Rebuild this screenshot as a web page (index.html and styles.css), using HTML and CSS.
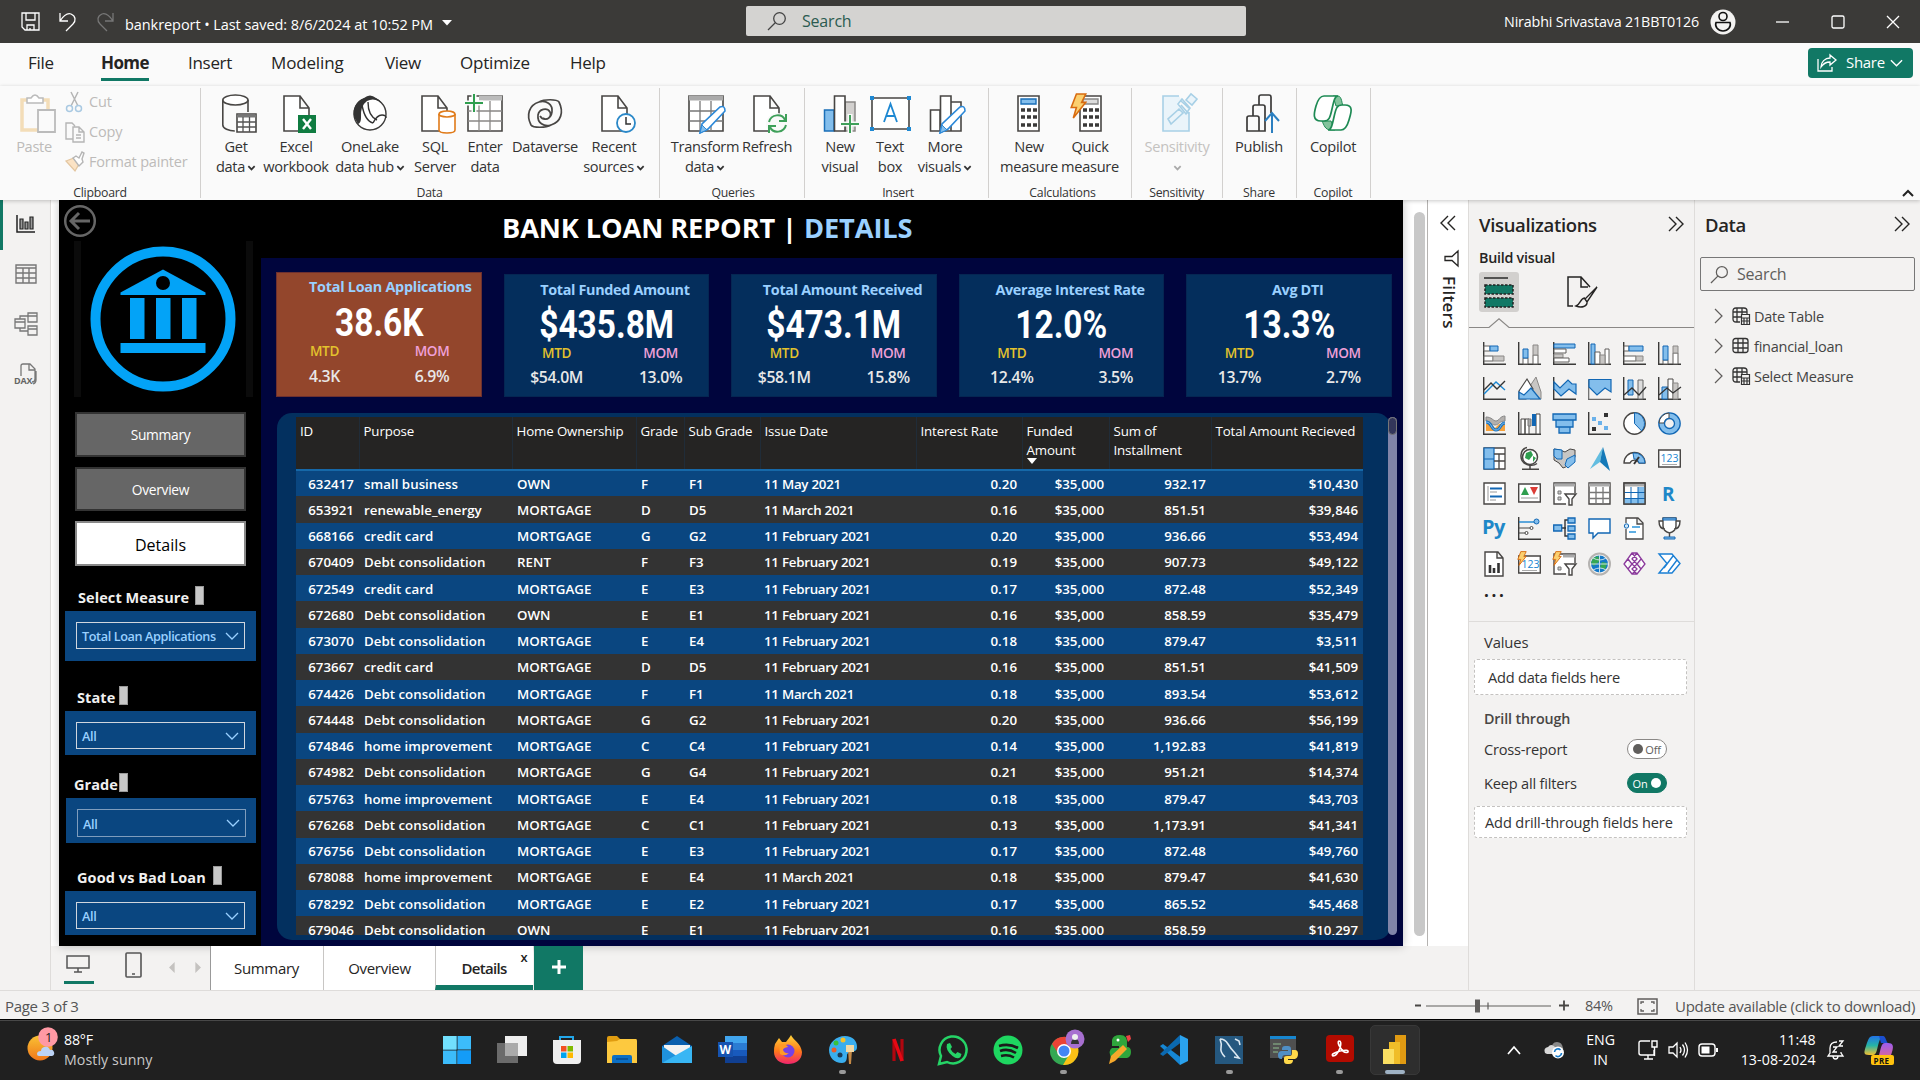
FILE: index.html
```html
<!DOCTYPE html>
<html lang="en">
<head>
<meta charset="utf-8">
<title>bankreport - Power BI Desktop</title>
<link rel="stylesheet" href="styles.css">
</head>
<body>
<svg class="defs" width="0" height="0">
  <defs>
    <symbol id="chev" viewBox="0 0 10 8"><path d="M1.5 2l3.5 3.6L8.500 2" fill="none" stroke="#333" stroke-width="1.900"/></symbol>
    <symbol id="chev-l" viewBox="0 0 14 9"><path d="M1 1l6 6 6-6" fill="none" stroke="#9ad0ff" stroke-width="1.300"/></symbol>
    <symbol id="dbl" viewBox="0 0 16 16"><path d="M1 1l7 7-7 7M8 1l7 7-7 7" fill="none" stroke="#252423" stroke-width="1.400"/></symbol>
    <symbol id="lens" viewBox="0 0 20 20"><circle cx="12.500" cy="7.500" r="5.800" fill="none" stroke="currentColor" stroke-width="1.300"/><path d="M8.500 11.500L1 19" stroke="currentColor" stroke-width="1.300"/></symbol>
    <symbol id="doc" viewBox="0 0 27 37"><path d="M1 1h16l9 12v23H1zM17 1v12h9" fill="#fff" stroke="#484644" stroke-width="1.600"/></symbol>
    <symbol id="axis" viewBox="0 0 23 23"><path d="M.7 0v22.300H23" fill="none" stroke="#3b3a39" stroke-width="1.400"/></symbol>
    <symbol id="calc" viewBox="0 0 23 37"><path d="M1 1h21v35H1z" fill="#fff" stroke="#484644" stroke-width="1.600"/><path d="M4 15h4m2 0h4m2 0h4M4 22h4m2 0h4m2 0h4M4 30h4m2 0h4m2 0h4" stroke="#3b3a39" stroke-width="3.500"/></symbol>
    <symbol id="pencil" viewBox="0 0 28 29"><path d="M1 28l2-9L21 2q5-2 5 4L9 24z" fill="#fff" stroke="#2b88d8" stroke-width="1.600"/><path d="M1 28l2-8 5 5z" fill="#83beec" stroke="#2b88d8"/></symbol>
    <symbol id="bolt" viewBox="0 0 16 25"><path d="M6 1h9l-4 8h4L3 24l3-10H1z" fill="#fbd06f" stroke="#d86b10" stroke-width="1.500"/></symbol>
  </defs>
</svg>

<header class="titlebar">
  <div class="quick">
    <svg width="20" height="20" viewBox="0 0 20 20"><path d="M1 1h17v17H4l-3-3zM5 1v7h9V1M6 18v-5h7v5M9 18v-2" fill="none" stroke="#fff" stroke-width="1.300"/></svg>
    <svg width="20" height="20" viewBox="0 0 20 20"><path d="M2 1v8h8M2 9C6 3 10 1 13 2c5 2 5 7 2 10l-7 7" fill="none" stroke="#fff" stroke-width="1.300"/></svg>
    <svg width="20" height="20" viewBox="0 0 20 20"><path d="M18 1v8h-8M18 9C14 3 10 1 7 2c-5 2-5 7-2 10l7 7" fill="none" stroke="#777" stroke-width="1.300"/></svg>
    <span class="doc-name">bankreport • Last saved: 8/6/2024 at 10:52 PM</span>
    <svg width="10" height="6" viewBox="0 0 10 6"><path d="M0 0h10L5 5.500z" fill="#fff"/></svg>
  </div>
  <div class="top-search"><svg width="20" height="20"><use href="#lens"/></svg><span>Search</span></div>
  <div class="account">
    <span>Nirabhi Srivastava 21BBT0126</span>
    <svg width="26" height="26" viewBox="0 0 26 26"><circle cx="13" cy="13" r="12.500" fill="#f3f2f1"/><circle cx="13" cy="7.500" r="4" fill="none" stroke="#111" stroke-width="1.600"/><path d="M6 13.500h14c1.500 4-2 8.500-7 8.500s-8.500-4.500-7-8.500z" fill="none" stroke="#111" stroke-width="1.600"/></svg>
  </div>
  <div class="winctl">
    <svg width="14" height="14"><path d="M0 7h13" stroke="#fff" stroke-width="1.300"/></svg>
    <svg width="14" height="14"><rect x="1" y="1" width="12" height="12" rx="1.500" fill="none" stroke="#fff" stroke-width="1.300"/></svg>
    <svg width="14" height="14"><path d="M1 1l12 12M13 1L1 13" stroke="#fff" stroke-width="1.300"/></svg>
  </div>
</header>

<nav class="menu">
  <a class="m-file">File</a><a class="m-home on">Home</a><a class="m-insert">Insert</a><a class="m-model">Modeling</a><a class="m-view">View</a><a class="m-opt">Optimize</a><a class="m-help">Help</a>
  <button class="share"><svg width="20" height="20" viewBox="0 0 20 20"><path d="M1 6v12h14v-4M13 2l6 5-6 5V9C9 9 6 11 4 14c0-5 4-9 9-9z" fill="none" stroke="#fff" stroke-width="1.300"/></svg><span>Share</span><svg width="13" height="9" viewBox="0 0 14 9"><path d="M1 1l6 6 6-6" fill="none" stroke="#fff" stroke-width="1.500"/></svg></button>
</nav>

<section class="ribbon">
  <div class="group g-clip">
    <div class="btns">
      <div class="rb w-paste"><svg class="ri" viewBox="0 0 36 40"><path d="M6 6h26v30H6z" fill="#fafafa" stroke="#f3ddb8" stroke-width="3.500"/><path d="M11 9V4h4q4-6 8 0h4v5z" fill="#fff" stroke="#bbb" stroke-width="1.500"/><path d="M22 16h17v22H22z" fill="#fafafa" stroke="#bbb" stroke-width="1.800"/></svg><span>Paste</span></div>
      <div class="clip-list">
        <div><svg width="20" height="22" viewBox="0 0 20 22"><path d="M6 1l7 14M13 1L6 15" stroke="#b5b5b5" stroke-width="1.500"/><circle cx="4.500" cy="17.500" r="3" fill="none" stroke="#a9c9e2" stroke-width="1.500"/><circle cx="13.500" cy="17.500" r="3" fill="none" stroke="#a9c9e2" stroke-width="1.500"/></svg>Cut</div>
        <div><svg width="20" height="22" viewBox="0 0 20 22"><path d="M8 18H1V2h6l3 3M8 6h6l5 5v10H8zM14 6v5h5M11 14h5M11 17h5" fill="none" stroke="#b5b5b5" stroke-width="1.400"/></svg>Copy</div>
        <div><svg width="20" height="22" viewBox="0 0 20 22"><path d="M1 10l8-3 5 6-4 7z" fill="#fbe3c5" stroke="#e3c6a0" stroke-width="1.300"/><path d="M8 7l3-2 3 2 3-6 2 1-2 6 1 3-4 4z" fill="#fff" stroke="#b5b5b5" stroke-width="1.400"/></svg>Format painter</div>
      </div>
    </div>
    <div class="glabel">Clipboard</div>
  </div>
  <div class="group g-data">
    <div class="btns">
      <div class="rb w60"><svg class="ri" viewBox="0 0 36 40"><path d="M4.800 6v25c0 3.500 6 6 12 6M30 6v12" fill="none" stroke="#484644" stroke-width="1.600"/><ellipse cx="17.400" cy="6" rx="12.600" ry="5" fill="#fff" stroke="#484644" stroke-width="1.600"/><path d="M19 20h19v18H19z" fill="#fff" stroke="#484644" stroke-width="1.600"/><path d="M19 22h19" stroke="#777" stroke-width="3"/><path d="M25 23v15M31.500 23v15M19 28h19M19 33h19" stroke="#555" stroke-width="1.300"/></svg><span>Get<br>data<svg class="cv"><use href="#chev"/></svg></span></div>
      <div class="rb w60"><svg class="ri" viewBox="0 0 36 40"><use href="#doc" x="5" y="1" width="27" height="37"/><path d="M20 21h18v18H20z" fill="#107c41"/><path d="M25 25l8 10M33 25l-8 10" stroke="#fff" stroke-width="2.400"/></svg><span>Excel<br>workbook</span></div>
      <div class="rb w90"><svg class="ri" viewBox="0 0 36 40"><circle cx="18" cy="20" r="16" fill="#fff" stroke="#3b3a39" stroke-width="1.400"/><path d="M12 4q6-5 12 0 4 2 6 5-8-6-15-2Q8 12 9 24q0 5-3 6Q-1 20 3 12q3-6 9-8z" fill="#333"/><path d="M10 11q3 16 11 18M16 8q0 14 9 18M21 29q4-8 9-8 4 0 4 3" fill="none" stroke="#333" stroke-width="1.400"/></svg><span>OneLake<br>data hub<svg class="cv"><use href="#chev"/></svg></span></div>
      <div class="rb w38"><svg class="ri" viewBox="0 0 36 40"><use href="#doc" x="4" y="1" width="27" height="37"/><path d="M22 20v16c0 4 16 4 16 0V20" fill="#fff" stroke="#e07b1a" stroke-width="1.600"/><ellipse cx="30" cy="20" rx="8" ry="3" fill="#fff" stroke="#e07b1a" stroke-width="1.600"/></svg><span>SQL<br>Server</span></div>
      <div class="rb w62"><svg class="ri" viewBox="0 0 36 40"><path d="M1 2h34v35H1z" fill="#fff" stroke="#484644" stroke-width="1.600"/><path d="M12 4h23" stroke="#bbb" stroke-width="5"/><path d="M12 7v30M23 7v30M1 17h34M1 27h34" stroke="#8a8886" stroke-width="1.300"/><path d="M7 0v18M-2 9h18" stroke="#fafafa" stroke-width="5"/><path d="M7 0v18M-2 9h18" stroke="#2f9e4f" stroke-width="2"/></svg><span>Enter<br>data</span></div>
      <div class="rb w58"><svg class="ri" viewBox="0 0 36 40"><path d="M32 8c5 10 2 20-8 23-7 2-14-2-13-10 1-6 9-8 12-3 2 5-3 9-7 6M4 31C-1 21 2 11 12 8c7-2 14 2 13 10-1 8-9 9-12 4M12 8c5-3 18-3 20 0M4 31c2 3 15 3 20 0" fill="none" stroke="#484644" stroke-width="1.700"/></svg><span>Dataverse</span></div>
      <div class="rb w80"><svg class="ri" viewBox="0 0 36 40"><use href="#doc" x="5" y="1" width="27" height="37"/><circle cx="30" cy="29" r="9" fill="#fff" stroke="#2b88c8" stroke-width="1.800"/><path d="M30 23v7h5" fill="none" stroke="#333" stroke-width="1.500"/></svg><span>Recent<br>sources<svg class="cv"><use href="#chev"/></svg></span></div>
    </div>
    <div class="glabel">Data</div>
  </div>
  <div class="group g-query">
    <div class="btns">
      <div class="rb w74"><svg class="ri" viewBox="0 0 36 40"><path d="M2 2h34v35H2z" fill="#fff" stroke="#484644" stroke-width="1.600"/><path d="M2 4h34" stroke="#aaa" stroke-width="5"/><path d="M13 7v30M24 7v30M2 17h34M2 27h34" stroke="#777" stroke-width="1.300"/><use href="#pencil" x="12" y="11" width="28" height="29"/></svg><span>Transform<br>data<svg class="cv"><use href="#chev"/></svg></span></div>
      <div class="rb w50"><svg class="ri" viewBox="0 0 36 40"><use href="#doc" x="4" y="1" width="27" height="37"/><circle cx="28" cy="30" r="11" fill="#fafafa"/><path d="M20 28c2-8 13-9 16-2M37 20v7h-7M37 31c-2 8-13 9-16 2M20 39v-7h7" fill="none" stroke="#3fa05a" stroke-width="2"/></svg><span>Refresh</span></div>
    </div>
    <div class="glabel">Queries</div>
  </div>
  <div class="group g-ins">
    <div class="btns">
      <div class="rb w52"><svg class="ri" viewBox="0 0 36 40"><path d="M23 8h10v29H23z" fill="#d2d0ce" stroke="#8a8886" stroke-width="1.500"/><path d="M2.500 16H12v21H2.500z" fill="#83beec" stroke="#1a6fb8" stroke-width="1.500"/><path d="M12.500 2H23v35H12.500z" fill="#fff" stroke="#484644" stroke-width="1.600"/><path d="M28 20v20M19 30h19" stroke="#fafafa" stroke-width="5"/><path d="M28 21v18M19 30h18" stroke="#3fa05a" stroke-width="2"/></svg><span>New<br>visual</span></div>
      <div class="rb w48"><svg class="ri" viewBox="0 0 36 40"><path d="M0 4h37v31H0z" fill="#fff" stroke="#484644" stroke-width="1.600"/><path d="M12 28L18.500 10 25 28M14.500 22h8" fill="none" stroke="#1e88d2" stroke-width="1.800"/><path d="M-2 2h4v4h-4zM35 2h4v4h-4zM-2 33h4v4h-4zM35 33h4v4h-4z" fill="#1e88d2"/></svg><span>Text<br>box</span></div>
      <div class="rb w62"><svg class="ri" viewBox="0 0 36 40"><path d="M24 8h10v29H24zM3.500 16H13v21H3.500zM13.500 2H24v35H13.500z" fill="#fff" stroke="#484644" stroke-width="1.600"/><use href="#pencil" x="12" y="11" width="28" height="29"/></svg><span>More<br>visuals<svg class="cv"><use href="#chev"/></svg></span></div>
    </div>
    <div class="glabel">Insert</div>
  </div>
  <div class="group g-calc">
    <div class="btns">
      <div class="rb w58"><svg class="ri" viewBox="0 0 36 40"><use href="#calc" x="6" y="1" width="23" height="37"/><path d="M10 5h15v5H10z" fill="#83beec" stroke="#1a6fb8" stroke-width="1.400"/></svg><span>New<br>measure</span></div>
      <div class="rb w64"><svg class="ri" viewBox="0 0 36 40"><use href="#calc" x="7" y="1" width="23" height="37"/><path d="M11 5h15v5H11z" fill="#ddd" stroke="#888" stroke-width="1.400"/><use href="#bolt" x="-2" y="-1" width="17" height="26"/></svg><span>Quick<br>measure</span></div>
    </div>
    <div class="glabel">Calculations</div>
  </div>
  <div class="group g-sens">
    <div class="btns"><div class="rb dim w80"><svg class="ri" viewBox="0 0 36 40"><path d="M20 2H4v35h26V18M20 15L9 25l3 5 12-11zM22 11l8 9M27 6l5-6 6 5-5 6zM22 7l9 8M19 10l4-5 8 9-4 6z" fill="#eaf4fa" stroke="#a8d0e6" stroke-width="1.600"/></svg><span>Sensitivity<br><svg class="cv"><use href="#chev"/></svg></span></div></div>
    <div class="glabel">Sensitivity</div>
  </div>
  <div class="group g-share">
    <div class="btns"><div class="rb w62"><svg class="ri" viewBox="0 0 36 40"><path d="M6 37V24q0-2 2-2h8q2 0 2 2v13zM12 22v-9q0-2 2-2h8q2 0 2 2v24h-6M18 11V3q0-2 2-2h8q2 0 2 2v16" fill="none" stroke="#3b3a39" stroke-width="1.700"/><path d="M31 39V20M24 27l7-8 7 8" fill="none" stroke="#2b7fc0" stroke-width="2"/></svg><span>Publish</span></div></div>
    <div class="glabel">Share</div>
  </div>
  <div class="group g-share">
    <div class="btns"><div class="rb w62"><svg class="ri" viewBox="0 0 36 40"><path d="M18 2h5c4 0 4 9 5 10h-7z" fill="#83c39c" stroke="#1e8a54"/><path d="M7 27h9l4 9h-4c-6 0-7-5-9-9z" fill="#83c39c" stroke="#1e8a54"/><path d="M23 2H9C5 2 3 5 1 12s-4 15 5 15h3c5 0 6-3 8-12 2-9 3-13 6-13z" fill="#fff" stroke="#1e8a54" stroke-width="1.700"/><path d="M13 36h13c4 0 6-3 8-10s5-15-4-15h-3c-5 0-6 3-8 12-2 9-3 13-6 13z" fill="#fff" stroke="#1e8a54" stroke-width="1.700"/></svg><span>Copilot</span></div></div>
    <div class="glabel">Copilot</div>
  </div>
  <svg class="collapse" width="12" height="8" viewBox="0 0 12 8"><path d="M1 7l5-5 5 5" fill="none" stroke="#222" stroke-width="2"/></svg>
</section>

<main class="work">
  <aside class="views">
    <div class="v on"><svg width="20" height="18" viewBox="0 0 20 18"><path d="M1 0v17h18" fill="none" stroke="#222" stroke-width="1.500"/><path d="M4 4h3v10H4zM9 7h3v7H9zM14 2h3v12h-3z" fill="#999" stroke="#222" stroke-width="1.200"/></svg></div>
    <div class="v"><svg width="22" height="20" viewBox="0 0 22 20"><path d="M1 1h20v18H1zM1 4h20M1 9h20M1 14h20M8 4v15M14 4v15" fill="none" stroke="#777" stroke-width="1.400"/></svg></div>
    <div class="v"><svg width="24" height="24" viewBox="0 0 24 24"><path d="M1 7h10v9H1zM1 10h10M14 1h9v9h-9zM14 4h9M14 14h9v9h-9zM14 17h9M6 7V4h8M6 16v3h8" fill="none" stroke="#777" stroke-width="1.300"/></svg></div>
    <div class="v"><svg width="24" height="22" viewBox="0 0 24 22"><path d="M7 13V3q0-2 2-2h7l5 5v10q0 3-3 3M15 1v6h6M22 8v9q0 3-3 4" fill="none" stroke="#777" stroke-width="1.300"/><text x="0" y="21" class="dax">DAX</text></svg></div>
  </aside>

  <div class="center">
    <div class="stage">
      <div class="report">
        <div class="side">
          <svg class="back" width="34" height="34" viewBox="0 0 34 34"><circle cx="17" cy="17" r="14.800" fill="none" stroke="#666" stroke-width="2.500"/><path d="M27 17H9M16 9l-8 8 8 8" fill="none" stroke="#666" stroke-width="3"/></svg>
          <div class="logo"><svg width="146" height="146" viewBox="0 0 146 146"><circle cx="73" cy="73" r="67.500" fill="none" stroke="#03a3f7" stroke-width="10"/><path d="M73 23.500l42.500 23v2.500h-85v-2.500z" fill="#03a3f7"/><circle cx="73" cy="37" r="7" fill="#000"/><path d="M40 52h14.500v41H40zM66 52h14.500v41H66zM92 52h14.500v41H92zM30.500 97h85v10h-85z" fill="#03a3f7"/></svg></div>
          <div class="navbtn">Summary</div>
          <div class="navbtn">Overview</div>
          <div class="navbtn sel">Details</div>
          <div class="slabel s1">Select Measure<i></i></div>
          <div class="slicer tall"><div>Total Loan Applications<svg width="14" height="9"><use href="#chev-l"/></svg></div></div>
          <div class="slabel s2">State<i></i></div>
          <div class="slicer"><div>All<svg width="14" height="9"><use href="#chev-l"/></svg></div></div>
          <div class="slabel s3">Grade<i></i></div>
          <div class="slicer soft"><div>All<svg width="14" height="9"><use href="#chev-l"/></svg></div></div>
          <div class="slabel s4">Good vs Bad Loan<i></i></div>
          <div class="slicer"><div>All<svg width="14" height="9"><use href="#chev-l"/></svg></div></div>
        </div>
        <div class="body">
          <h1>BANK LOAN REPORT | <em>DETAILS</em></h1>
          <div class="kpis">
            <div class="kpi hot"><b>Total Loan Applications</b><strong>38.6K</strong><div class="pair lab"><span>MTD</span><span>MOM</span></div><div class="pair"><span>4.3K</span><span>6.9%</span></div></div>
            <div class="kpi"><b>Total Funded Amount</b><strong>$435.8M</strong><div class="pair lab"><span>MTD</span><span>MOM</span></div><div class="pair"><span>$54.0M</span><span>13.0%</span></div></div>
            <div class="kpi"><b>Total Amount Received</b><strong>$473.1M</strong><div class="pair lab"><span>MTD</span><span>MOM</span></div><div class="pair"><span>$58.1M</span><span>15.8%</span></div></div>
            <div class="kpi"><b>Average Interest Rate</b><strong>12.0%</strong><div class="pair lab"><span>MTD</span><span>MOM</span></div><div class="pair"><span>12.4%</span><span>3.5%</span></div></div>
            <div class="kpi"><b>Avg DTI</b><strong>13.3%</strong><div class="pair lab"><span>MTD</span><span>MOM</span></div><div class="pair"><span>13.7%</span><span>2.7%</span></div></div>
          </div>
          <div class="tablebox">
            <div class="clip">
            <table>
              <colgroup><col class="c63"><col class="c153"><col class="c124"><col class="c48"><col class="c76"><col class="c156"><col class="c106"><col class="c87"><col class="c102"><col class="c152"></colgroup>
              <thead><tr><th>ID</th><th>Purpose</th><th>Home Ownership</th><th>Grade</th><th>Sub Grade</th><th>Issue Date</th><th>Interest Rate</th><th>Funded<br>Amount<svg class="sort" width="10" height="6"><path d="M0 0h10L5 6z" fill="#fff"/></svg></th><th>Sum of<br>Installment</th><th>Total Amount Recieved</th></tr></thead>
              <tbody>
<tr><td>632417</td><td>small business</td><td>OWN</td><td>F</td><td>F1</td><td>11 May 2021</td><td>0.20</td><td>$35,000</td><td>932.17</td><td>$10,430</td></tr>
<tr><td>653921</td><td>renewable_energy</td><td>MORTGAGE</td><td>D</td><td>D5</td><td>11 March 2021</td><td>0.16</td><td>$35,000</td><td>851.51</td><td>$39,846</td></tr>
<tr><td>668166</td><td>credit card</td><td>MORTGAGE</td><td>G</td><td>G2</td><td>11 February 2021</td><td>0.20</td><td>$35,000</td><td>936.66</td><td>$53,494</td></tr>
<tr><td>670409</td><td>Debt consolidation</td><td>RENT</td><td>F</td><td>F3</td><td>11 February 2021</td><td>0.19</td><td>$35,000</td><td>907.73</td><td>$49,122</td></tr>
<tr><td>672549</td><td>credit card</td><td>MORTGAGE</td><td>E</td><td>E3</td><td>11 February 2021</td><td>0.17</td><td>$35,000</td><td>872.48</td><td>$52,349</td></tr>
<tr><td>672680</td><td>Debt consolidation</td><td>OWN</td><td>E</td><td>E1</td><td>11 February 2021</td><td>0.16</td><td>$35,000</td><td>858.59</td><td>$35,479</td></tr>
<tr><td>673070</td><td>Debt consolidation</td><td>MORTGAGE</td><td>E</td><td>E4</td><td>11 February 2021</td><td>0.18</td><td>$35,000</td><td>879.47</td><td>$3,511</td></tr>
<tr><td>673667</td><td>credit card</td><td>MORTGAGE</td><td>D</td><td>D5</td><td>11 February 2021</td><td>0.16</td><td>$35,000</td><td>851.51</td><td>$41,509</td></tr>
<tr><td>674426</td><td>Debt consolidation</td><td>MORTGAGE</td><td>F</td><td>F1</td><td>11 March 2021</td><td>0.18</td><td>$35,000</td><td>893.54</td><td>$53,612</td></tr>
<tr><td>674448</td><td>Debt consolidation</td><td>MORTGAGE</td><td>G</td><td>G2</td><td>11 February 2021</td><td>0.20</td><td>$35,000</td><td>936.66</td><td>$56,199</td></tr>
<tr><td>674846</td><td>home improvement</td><td>MORTGAGE</td><td>C</td><td>C4</td><td>11 February 2021</td><td>0.14</td><td>$35,000</td><td>1,192.83</td><td>$41,819</td></tr>
<tr><td>674982</td><td>Debt consolidation</td><td>MORTGAGE</td><td>G</td><td>G4</td><td>11 February 2021</td><td>0.21</td><td>$35,000</td><td>951.21</td><td>$14,374</td></tr>
<tr><td>675763</td><td>home improvement</td><td>MORTGAGE</td><td>E</td><td>E4</td><td>11 February 2021</td><td>0.18</td><td>$35,000</td><td>879.47</td><td>$43,703</td></tr>
<tr><td>676268</td><td>Debt consolidation</td><td>MORTGAGE</td><td>C</td><td>C1</td><td>11 February 2021</td><td>0.13</td><td>$35,000</td><td>1,173.91</td><td>$41,341</td></tr>
<tr><td>676756</td><td>Debt consolidation</td><td>MORTGAGE</td><td>E</td><td>E3</td><td>11 February 2021</td><td>0.17</td><td>$35,000</td><td>872.48</td><td>$49,760</td></tr>
<tr><td>678088</td><td>home improvement</td><td>MORTGAGE</td><td>E</td><td>E4</td><td>11 March 2021</td><td>0.18</td><td>$35,000</td><td>879.47</td><td>$41,630</td></tr>
<tr><td>678292</td><td>Debt consolidation</td><td>MORTGAGE</td><td>E</td><td>E2</td><td>11 February 2021</td><td>0.17</td><td>$35,000</td><td>865.52</td><td>$45,468</td></tr>
<tr><td>679046</td><td>Debt consolidation</td><td>OWN</td><td>E</td><td>E1</td><td>11 February 2021</td><td>0.16</td><td>$35,000</td><td>858.59</td><td>$10,297</td></tr>
              </tbody>
            </table>
            </div>
            <div class="tscroll"><i></i></div>
          </div>
        </div>
      </div>
      <div class="vscroll"><i></i></div>
      <div class="filters">
        <svg class="flip" width="16" height="16"><use href="#dbl"/></svg>
        <svg width="15" height="17" viewBox="0 0 15 17"><path d="M14 1v15L8 10.500H1v-4h7z" fill="none" stroke="#252423" stroke-width="1.300"/></svg>
        <span>Filters</span>
      </div>
    </div>
    <div class="pages">
      <div class="dev on"><svg width="24" height="18" viewBox="0 0 24 18"><path d="M1 1h22v12H1zM12 13v4M8 17h8" fill="none" stroke="#555" stroke-width="1.500"/></svg></div>
      <div class="dev phone"><svg width="17" height="26" viewBox="0 0 17 26"><rect x="1" y="1" width="15" height="24" rx="1" fill="none" stroke="#555" stroke-width="1.600"/><path d="M7 22h3" stroke="#555" stroke-width="1.500"/></svg></div>
      <div class="arrows"><svg width="34" height="11" viewBox="0 0 34 11"><path d="M6 0v11L0 5.500zM28 0v11l6-5.500z" fill="#c4c2c0"/></svg></div>
      <div class="tab t1">Summary</div><div class="tab t2">Overview</div><div class="tab t3 cur">Details<sup>x</sup></div><div class="plus"><svg width="14" height="14"><path d="M7 0v14M0 7h14" stroke="#fff" stroke-width="3"/></svg></div>
    </div>
  </div>

  <aside class="vis">
    <div class="phead"><span>Visualizations</span><svg width="16" height="16"><use href="#dbl"/></svg></div>
    <div class="build">Build visual</div>
    <div class="modes">
      <div class="mode on"><svg width="30" height="33" viewBox="0 0 30 33"><path d="M0 2h24" stroke="#333" stroke-width="1.600"/><path d="M1 9h28v9H1zM1 22h28v9H1z" fill="#117865" stroke="#222" stroke-width="1.500" stroke-dasharray="2.500 1.500"/></svg></div>
      <div class="mode"><svg width="31" height="32" viewBox="0 0 31 32"><path d="M6 30H1V1h13l9 10M14 1v10h7" fill="none" stroke="#252423" stroke-width="1.500"/><path d="M30 11L18 23l2 3zM18 22c-5 0-4 6-9 8 5 2 12 1 11-5" fill="none" stroke="#252423" stroke-width="1.400"/></svg></div>
    </div>
    <svg class="notch" width="225" height="10" viewBox="0 0 225 10"><path d="M0 9.500h20L30 .7l10 8.800h185" fill="none" stroke="#8a8886" stroke-width="1.200"/></svg>
    <div class="icons">
      <svg><use href="#axis"/><path d="M1 4h6v5H1zM1 14h9v5H1z" fill="#fff" stroke="#605e5c"/><path d="M7 4h8v5H7z" fill="#83beec" stroke="#1267b4"/><path d="M10 14h11v5H10z" fill="#c8c6c4" stroke="#8a8886"/></svg>
      <svg><use href="#axis"/><path d="M5 16h5v6H5zM15 13h5v9h-5z" fill="#fff" stroke="#605e5c"/><path d="M5 7h5v9H5z" fill="#83beec" stroke="#1267b4"/><path d="M15 3h5v10h-5z" fill="#c8c6c4" stroke="#8a8886"/></svg>
      <svg><use href="#axis"/><path d="M1 2h21v4H1z" fill="#83beec" stroke="#1267b4"/><path d="M1 7h12v4H1z" fill="#fff" stroke="#605e5c"/><path d="M1 12h9v4H1z" fill="#c8c6c4" stroke="#8a8886"/><path d="M1 16h15v4H1z" fill="#fff" stroke="#605e5c"/></svg>
      <svg><use href="#axis"/><path d="M3 2h4v20H3z" fill="#83beec" stroke="#1267b4"/><path d="M7 10h5v12H7zM17 7h4v15h-4z" fill="#fff" stroke="#605e5c"/><path d="M12 13h5v9h-5z" fill="#c8c6c4" stroke="#8a8886"/></svg>
      <svg><use href="#axis"/><path d="M1 4h5v5H1zM1 14h12v5H1z" fill="#fff" stroke="#605e5c"/><path d="M6 4h14v5H6z" fill="#83beec" stroke="#1267b4"/><path d="M13 14h7v5h-7z" fill="#c8c6c4" stroke="#8a8886"/></svg>
      <svg><use href="#axis"/><path d="M5 18h5v4H5zM15 11h5v11h-5z" fill="#fff" stroke="#605e5c"/><path d="M5 4h5v14H5z" fill="#83beec" stroke="#1267b4"/><path d="M15 4h5v7h-5z" fill="#c8c6c4" stroke="#8a8886"/></svg>

      <svg><use href="#axis"/><path d="M1 17L13 5l9 8" fill="none" stroke="#1a86d2" stroke-width="1.400"/><path d="M1 13l7-7 6 6 8-8" fill="none" stroke="#333" stroke-width="1.400"/></svg>
      <svg><path d="M12 9l6-9 5 15v7H12z" fill="#c8c6c4" stroke="#8a8886"/><path d="M1 14L9 2l6 10-7 10H1z" fill="#fff" stroke="#484644" stroke-width="1.200"/><path d="M1 22V15l5 3 7-7 9 11z" fill="#83beec" stroke="#1267b4" stroke-width="1.200"/></svg>
      <svg><use href="#axis"/><path d="M1 5l6 6 8-8 4 4h4v10l-7-5-8 7-7-7z" fill="#83beec" stroke="#1267b4" stroke-width="1.200"/></svg>
      <svg><path d="M.7 2.500V22M0 22.300h23" stroke="#666" stroke-width="1.200"/><path d="M1 2.500h22V15l-6-4-8 7-8-8z" fill="#83beec" stroke="#1267b4" stroke-width="1.200"/></svg>
      <svg><use href="#axis"/><path d="M5 3h5v15H5z" fill="#83beec" stroke="#1267b4"/><path d="M15 3h5v19h-5z" fill="#ddd" stroke="#666"/><path d="M1 18l8-7 7 7 7-8" fill="none" stroke="#333" stroke-width="1.300"/></svg>
      <svg><use href="#axis"/><path d="M4 10h6v12H4z" fill="#83beec" stroke="#1267b4"/><path d="M10 2h5v20h-5z" fill="#fff" stroke="#484644"/><path d="M15 6h5v16h-5z" fill="#c8c6c4" stroke="#8a8886"/><path d="M1 18l8-7 6 5 8-6" fill="none" stroke="#333" stroke-width="1.300"/></svg>

      <svg><use href="#axis"/><path d="M3 12h5l4 4 4-4h6v7H3z" fill="#f7a23b"/><path d="M3 5c6 0 7 4 10 4s4-5 9-5v5c-6 0-6 4-10 4s-4-4-9-4z" fill="#b3b0ad" stroke="#888"/><path d="M3 10c6 0 5 8 10 8s4-7 9-7" fill="none" stroke="#1a74c2" stroke-width="3"/><path d="M3 10c6 0 5 8 10 8s4-7 9-7" fill="none" stroke="#83beec" stroke-width="1"/></svg>
      <svg><use href="#axis"/><path d="M3 7h4v15H3zM7 7h4v15H7zM18 2h4v20h-4z" fill="#fff" stroke="#484644"/><path d="M10 7h3v7h-3z" fill="#aaa" stroke="#777"/><path d="M14 2h4v12h-4z" fill="#1267b4"/></svg>
      <svg><path d="M0 2h23v6H0zM3 8h17v7H3zM6 15h11v6H6z" fill="#83beec" stroke="#1267b4" stroke-width="1.300"/></svg>
      <svg><use href="#axis"/><path d="M16 1h4v4h-4zM4 15h4v4H4z" fill="#333"/><path d="M4 5h4v4H4zM10 9h4v4h-4zM16 14h4v4h-4z" fill="#6ab1ea"/></svg>
      <svg><circle cx="11.500" cy="11.500" r="10.700" fill="#fff" stroke="#484644" stroke-width="1.400"/><path d="M11.500 11.500V.8a10.700 10.700 0 0 1 7 18z" fill="#83beec" stroke="#1267b4"/></svg>
      <svg><circle cx="11.500" cy="11.500" r="10.700" fill="#83beec" stroke="#1267b4" stroke-width="1.300"/><path d="M1 11A10.700 10.700 0 0 1 11 1v5a6 6 0 0 0-5 5z" fill="#fff" stroke="#484644"/><circle cx="11.500" cy="11.500" r="5" fill="#f3f2f1" stroke="#1267b4" stroke-width="1.300"/></svg>

      <svg><path d="M1 1h21v21H1z" fill="#fff" stroke="#484644" stroke-width="1.300"/><path d="M1 1h10v21H1zM1 12h10" fill="#83beec" stroke="#1267b4" stroke-width="1.200"/><path d="M11 7h11M16 7v15M16 14h6M11 14h5" stroke="#484644" stroke-width="1.300"/></svg>
      <svg><circle cx="12" cy="10" r="7.500" fill="#fff" stroke="#484644" stroke-width="1.500"/><path d="M8 6l5-2 2 4-4 5-4-2zM15 9l3 2-3 4z" fill="#2f9e4f"/><path d="M9 .6C2 2 0 14 9 17.500q6 2 10-1M12 18v4M4 22.300h17" fill="none" stroke="#484644" stroke-width="1.500"/></svg>
      <svg><path d="M1 2l6 1 5 2 5-3 5 1v7l-3 4-4 5-5 2-4-5-5-3z" fill="#c8c6c4" stroke="#484644"/><path d="M1 2l8 1v9H4L1 9zM14 12l8-4v7l-7 6-3-3z" fill="#83beec" stroke="#1267b4"/></svg>
      <svg><path d="M15 0L2 22l10-7z" fill="#62bde0"/><path d="M15 0l7 24-10-9z" fill="#1479b8"/></svg>
      <svg><path d="M1 16a10.500 10.500 0 0 1 21 0h-6a5 5 0 0 0-9 0z" fill="#fff" stroke="#484644" stroke-width="1.300"/><path d="M10 6a10.500 10.500 0 0 1 12 10h-6a5 5 0 0 0-5-4z" fill="#83beec" stroke="#1267b4"/><path d="M16 10l-5 7" stroke="#333" stroke-width="2"/></svg>
      <svg><path d="M.7 3h21.600v17H.7z" fill="#fff" stroke="#484644" stroke-width="1.400"/><text x="2.500" y="15" class="n123">123</text><path d="M4 17.500h15" stroke="#aaa"/></svg>

      <svg><path d="M1 1h21v21H1z" fill="#fff" stroke="#484644" stroke-width="1.400"/><path d="M5 4v15M7 10h7M7 18h6" stroke="#999"/><path d="M7 6.500h12M7 14.500h12" stroke="#1267b4" stroke-width="2"/></svg>
      <svg><path d="M.7 2h21.600v18H.7z" fill="#fff" stroke="#484644" stroke-width="1.400"/><path d="M3 13l4-8 4 8z" fill="#2f9e4f"/><path d="M12 5h8l-4 8z" fill="#dc3c36"/><path d="M3 16h17" stroke="#999"/></svg>
      <svg><path d="M13 22H1V1h21v10" fill="#fff" stroke="#484644" stroke-width="1.400"/><path d="M1 3h21" stroke="#aaa" stroke-width="3"/><path d="M5 9h3v3H5zM5 15h3v3H5z" fill="#ccc" stroke="#777"/><path d="M12 12h11l-4 5v6h-3v-6z" fill="#fff" stroke="#484644" stroke-width="1.400"/></svg>
      <svg><path d="M1 1h21v21H1z" fill="#fff" stroke="#484644" stroke-width="1.400"/><path d="M1 3h21" stroke="#aaa" stroke-width="3"/><path d="M8 5v17M15 5v17M1 10.500h21M1 16.500h21" stroke="#777" stroke-width="1.300"/></svg>
      <svg><path d="M1 1h21v21H1z" fill="#fff" stroke="#484644" stroke-width="1.400"/><path d="M1 16h14V5h7v17H1z" fill="#83beec"/><path d="M1 3h21" stroke="#aaa" stroke-width="3"/><path d="M8 5v17M15 5v17M1 10.500h21M1 16.500h21" stroke="#1267b4"/><path d="M1 1h21v21H1z" fill="none" stroke="#484644" stroke-width="1.400"/></svg>
      <svg><text x="4" y="19" class="rtxt">R</text></svg>

      <svg><text x="-1" y="16.500" class="pytxt">Py</text></svg>
      <svg><use href="#axis"/><path d="M1 5h16" stroke="#1a86d2" stroke-width="1.400"/><circle cx="18.500" cy="4.500" r="2.500" fill="#83beec" stroke="#1267b4"/><path d="M1 11h11M1 16h6" stroke="#484644" stroke-width="1.200"/><circle cx="13.500" cy="11" r="1.500" fill="#fff" stroke="#484644"/><circle cx="8.500" cy="16" r="1.500" fill="#fff" stroke="#484644"/></svg>
      <svg><path d="M8 11h5M15 3h-3v16h3" fill="none" stroke="#333" stroke-width="1.400"/><path d="M.7 8h8v6h-8zM15 1h7v5h-7zM15 9h7v5h-7zM15 17h7v5h-7z" fill="#83beec" stroke="#1267b4" stroke-width="1.300"/></svg>
      <svg><path d="M1 2h21v14H10l-5 5v-5H1z" fill="#fff" stroke="#1267b4" stroke-width="1.400"/></svg>
      <svg><path d="M3 6V1h12l5 5v16H3V12M14 1v6h6" fill="#fff" stroke="#484644" stroke-width="1.300"/><circle cx="3.500" cy="9" r="2.200" fill="#cde6f8" stroke="#1267b4"/><path d="M9 10h8M6 15h7" stroke="#2b95dc" stroke-width="1.300"/></svg>
      <svg><path d="M5 1h13v8q0 5-6.500 7Q5 14 5 9zM5 4H1q0 8 6 8M18 4h4q0 8-6 8M11.500 16v4" fill="#fff" stroke="#484644" stroke-width="1.400"/><path d="M5 1h13v2H5zM6 20h11v2H6z" fill="#83beec" stroke="#1267b4"/></svg>

      <svg><path d="M2 0h13l5 6v18H2zM14 0v6h6" fill="#fff" stroke="#484644" stroke-width="1.400"/><path d="M7 21v-8M11 21v-5M15.500 21V11" stroke="#333" stroke-width="2.600"/></svg>
      <svg><path d="M.7 4h21.600v17H.7z" fill="#fff" stroke="#484644" stroke-width="1.400"/><text x="3.500" y="16" class="n123">123</text><path d="M4 18.500h15" stroke="#aaa"/><use href="#bolt" x="-2" y="-1" width="12" height="15"/></svg>
      <svg><path d="M13 22H1V2h21v9" fill="#fff" stroke="#484644" stroke-width="1.400"/><path d="M10 4h12" stroke="#aaa" stroke-width="3"/><path d="M5 15h3v3H5z" fill="#ccc" stroke="#777"/><path d="M12 12h11l-4 5v6h-3v-6z" fill="#fff" stroke="#484644" stroke-width="1.400"/><use href="#bolt" x="-2" y="-1" width="12" height="15"/></svg>
      <svg><circle cx="11.500" cy="12" r="10.500" fill="none" stroke="#b5b3b1" stroke-width="2"/><circle cx="11.500" cy="12" r="8.500" fill="#1479c9"/><path d="M5 6l5-2 2 5-6 5-3-3zM14 10l5 1-2 7-5-3z" fill="#35a853"/><path d="M3 12h17M11.500 3v18M5 6q7 4 13 0M5 18q7-4 13 0" fill="none" stroke="#c8dfe8"/></svg>
      <svg><path d="M9 1h5l8 11-8 10H9L1 12zM9 1l5 6-5 5 5 5-5 5M14 1L9 7l5 5-5 5 5 5M1 12l4-5M18 7l-4 5 4 5M5 17l4-5-4-5" fill="#fff" stroke="#8b3a9c" stroke-width="1.300"/></svg>
      <svg><path d="M1 2h13l8 9.500L14 21H1l8-9.500zM6 16l9-12M10 20l9-12" fill="#fff" stroke="#1a7fd4" stroke-width="1.400"/></svg>
    </div>
    <div class="dots">. . .</div>
    <div class="wells">
      <div class="wl">Values</div>
      <div class="drop">Add data fields here</div>
      <div class="dt">Drill through</div>
      <div class="opt">Cross-report<span class="tog"><i></i>Off</span></div>
      <div class="opt o2">Keep all filters<span class="tog onn">On<i></i></span></div>
      <div class="drop d2">Add drill-through fields here</div>
    </div>
  </aside>

  <aside class="datap">
    <div class="phead"><span>Data</span><svg width="16" height="16"><use href="#dbl"/></svg></div>
    <div class="dsearch"><svg width="19" height="19"><use href="#lens"/></svg>Search</div>
    <div class="tree"><svg width="9" height="16" viewBox="0 0 9 16"><path d="M1 1l7 7-7 7" fill="none" stroke="#605e5c" stroke-width="1.200"/></svg><svg width="18" height="18" viewBox="0 0 18 18"><path d="M8 15H4q-3 0-3-3V4q0-3 3-3h8q3 0 3 3v3M1 5h14M1 10h8M5 1v14M10 1v8" fill="none" stroke="#333" stroke-width="1.300"/><path d="M9.500 7.500h8v10h-8zM9.500 11h8M12 11v6.500M15 11v6.500M9.500 14h8" fill="#f3f2f1" stroke="#333" stroke-width="1.200"/></svg>Date Table</div>
    <div class="tree"><svg width="9" height="16" viewBox="0 0 9 16"><path d="M1 1l7 7-7 7" fill="none" stroke="#605e5c" stroke-width="1.200"/></svg><svg width="18" height="18" viewBox="0 0 18 18"><rect x="1" y="1.500" width="15" height="14" rx="2.500" fill="none" stroke="#333" stroke-width="1.300"/><path d="M1 6h15M1 11h15M6 1.500v14M11 1.500v14" stroke="#333" stroke-width="1.300"/></svg>financial_loan</div>
    <div class="tree"><svg width="9" height="16" viewBox="0 0 9 16"><path d="M1 1l7 7-7 7" fill="none" stroke="#605e5c" stroke-width="1.200"/></svg><svg width="18" height="18" viewBox="0 0 18 18"><path d="M8 15H4q-3 0-3-3V4q0-3 3-3h8q3 0 3 3v3M1 5h14M1 10h8M5 1v14M10 1v8" fill="none" stroke="#333" stroke-width="1.300"/><path d="M9.500 7.500h8v10h-8zM9.500 11h8M12 11v6.500M15 11v6.500M9.500 14h8" fill="#f3f2f1" stroke="#333" stroke-width="1.200"/></svg>Select Measure</div>
  </aside>
</main>

<footer class="status">
  <span class="pg">Page 3 of 3</span>
  <svg class="zoom" width="160" height="18" viewBox="0 0 160 18"><path d="M2 8.500h6M146 8.500h10M151 3.500v10" stroke="#484644" stroke-width="1.800"/><path d="M13 9h125M75 5.500v7" stroke="#605e5c" stroke-width="1.200"/><path d="M62 2.500h5v13h-5z" fill="#605e5c"/></svg>
  <span class="pct">84%</span>
  <svg class="fit" width="21" height="17" viewBox="0 0 21 17"><path d="M1 1h19v15H1z" fill="none" stroke="#605e5c" stroke-width="1.500"/><path d="M4 6V4h3M14 4h3v2M17 11v2h-3M7 13H4v-2" fill="none" stroke="#605e5c" stroke-width="1.300"/></svg>
  <span class="upd">Update available (click to download)</span>
</footer>

<footer class="taskbar">
  <div class="weather">
    <svg width="32" height="36" viewBox="0 0 32 36"><defs><linearGradient id="sun" x2="0" y2="1"><stop stop-color="#f9c234"/><stop offset="1" stop-color="#f0761a"/></linearGradient></defs><circle cx="13" cy="21" r="12.500" fill="url(#sun)"/><path d="M12 29h13q3-1 2-4-1-3-4-2-2-5-6-3-3 1-3 4-4 0-4 3 0 2 2 2z" fill="#bcd3f5"/><circle cx="21" cy="10" r="9.800" fill="#ff99a4"/><text x="18" y="15" class="one">1</text></svg>
    <div><div>88°F</div><div class="dimt">Mostly sunny</div></div>
  </div>
  <div class="apps">
    <div><svg viewBox="0 0 30 30"><path d="M1 1h13.500v13.500H1zM15.500 1H29v13.500H15.500zM1 15.500h13.500V29H1zM15.500 15.500H29V29H15.500z" fill="#3cbcfb"/><path d="M1 1h13.500v13.500H1z" fill="#72e0fd"/><path d="M15.500 15.500H29V29H15.500z" fill="#149cf8"/></svg></div>
    <div><svg viewBox="0 0 30 30"><path d="M0 8h21v20H0z" fill="#6b6b6b"/><path d="M8 1h22v20H8z" fill="#eee"/><path d="M8 8h13v13H8z" fill="#aaa"/></svg></div>
    <div><svg viewBox="0 0 30 30"><path d="M8 7V2h13v5" fill="none" stroke="#22a7ea" stroke-width="2"/><path d="M1 5h28v20q0 4-4 4H5q-4 0-4-4z" fill="#f0f0f0"/><path d="M9 11h5.500v5.500H9z" fill="#f25022"/><path d="M15.500 11H21v5.500h-5.500z" fill="#7fba00"/><path d="M9 17.500h5.500V23H9z" fill="#00a4ef"/><path d="M15.500 17.500H21V23h-5.500z" fill="#ffb900"/></svg></div>
    <div><svg viewBox="0 0 30 30"><path d="M0 3q0-2 2-2h8l3 3v5H0z" fill="#e09c10"/><path d="M0 7l10-1 3-2h16q1 0 1 2v22H0z" fill="#fdc93f"/><path d="M5 28v-6q0-2 2-2h16q2 0 2 2v6z" fill="#0c6fc4"/><path d="M9 24h12" stroke="#064a90" stroke-width="1.500"/></svg></div>
    <div><svg viewBox="0 0 30 30"><path d="M0 11L15 1l15 10v3H0z" fill="#0a5fae"/><path d="M2 10h26v12H2z" fill="#f2f2f2"/><path d="M0 11l16 11L0 28z" fill="#1f92dd"/><path d="M30 11v17H0z" fill="#38b6f4"/></svg></div>
    <div><svg viewBox="0 0 30 30"><path d="M7 1h22v7H7z" fill="#41a5ee"/><path d="M7 8h22v7H7z" fill="#2b7cd3"/><path d="M7 15h22v6H7z" fill="#185abd"/><path d="M7 21h22v7H7z" fill="#103f91"/><path d="M0 7h15v15H0z" fill="#1653b0"/><text x="1.500" y="19" class="wtxt">W</text></svg></div>
    <div><svg viewBox="0 0 30 30"><defs><linearGradient id="ff" x2="0" y2="1"><stop stop-color="#ffd43b"/><stop offset=".55" stop-color="#ff7a1a"/><stop offset="1" stop-color="#f0246e"/></linearGradient></defs><path d="M2 9l4-6 3 4h4c2-3 4-5 5-7 2 5 10 8 11 17 0 8-6 12-14 12S1 24 1 17q0-5 1-8z" fill="url(#ff)"/><circle cx="15" cy="16" r="6.500" fill="#7542e5"/><path d="M6 9q8 0 9 3-5 1-5 3 2 4 6 3-4 4-9 1z" fill="#ff9a26"/></svg></div>
    <div class="run"><svg viewBox="0 0 30 30"><path d="M17 1c8 0 12 5 12 11 0 7-9 3-10 8 0 5-1 8-5 8C6 28 1 22 1 15S8 1 17 1z" fill="#3aaeee"/><circle cx="12" cy="20" r="2.500" fill="#1b3c58"/><circle cx="6" cy="15" r="2.500" fill="#e95b2c"/><circle cx="8" cy="8" r="2.500" fill="#3ac13b"/><circle cx="15" cy="5" r="2.500" fill="#f5c22a"/><path d="M20 15h4l-1 14h-2z" fill="#c58a46"/><path d="M18 10h8v7h-8z" fill="#f1d9a6"/></svg></div>
    <div><svg viewBox="0 0 30 30"><path d="M11 4v22M19 4v22" stroke="#b1060f" stroke-width="3.200"/><path d="M11 4l8 22" stroke="#e50914" stroke-width="3.500"/></svg></div>
    <div><svg viewBox="0 0 30 30"><path d="M1 29l2-8A13.500 13.500 0 1 1 9 27z" fill="#1f1f1f" stroke="#25d366" stroke-width="2.500"/><path d="M9 9l3-1 2 4-1.500 2q2 4 5 5l2-2 4 2-1 3q-3 3-8-1Q7 15 9 9z" fill="#25d366"/></svg></div>
    <div><svg viewBox="0 0 30 30"><circle cx="15" cy="15" r="14.500" fill="#1ed760"/><path d="M6 11q10-3 19 2M7 16q8-3 16 2M8 21q7-2 13 1.500" fill="none" stroke="#1b1b1b" stroke-width="2.600"/></svg></div>
    <div class="run"><svg viewBox="0 0 30 30"><circle cx="15" cy="16" r="14" fill="#34a853"/><path d="M3 9a14 14 0 0 1 25 1H15l-6 8z" fill="#ea4335"/><path d="M28 10a14 14 0 0 1-14 20l7-12-2-8z" fill="#fbc116"/><circle cx="15" cy="16" r="7" fill="#fff"/><circle cx="15" cy="16" r="5.500" fill="#4285f4"/><circle cx="26" cy="4" r="9.500" fill="#a76fd0"/><path d="M22 9q0-5 4-5t4 5z" fill="#333"/><circle cx="26" cy="2" r="3" fill="#eee"/></svg></div>
    <div><svg viewBox="0 0 30 30"><path d="M8 5q1-5 8-5 8 0 7 9v3q4 0 4 5t-4 6H7q-3-8 1-10h7v-2H8z" fill="#2fa63c"/><circle cx="14" cy="5" r="1.500" fill="#fff"/><path d="M22 1l4-1 1 4-3 3z" fill="#e44"/><path d="M5 29l2-8L19 10l4 4L11 26z" fill="#f6a92b"/></svg></div>
    <div><svg viewBox="0 0 30 30"><path d="M1 11l3-2 20 15-3 6z" fill="#1687d4"/><path d="M1 19l3 2L24 6l-3-6z" fill="#0b69b0"/><path d="M21 0l8 4v22l-8 4z" fill="#2aa2ee"/></svg></div>
    <div class="run"><svg viewBox="0 0 30 30"><path d="M1 1h28v28H1z" fill="#25587f"/><path d="M6 4q5 0 8 5t7 9l4 5-5-1M6 4q2 5 1 9t4 9M21 4l4 2 1 4" fill="none" stroke="#dce9f2" stroke-width="1.600"/></svg></div>
    <div><svg viewBox="0 0 30 30"><path d="M1 1h26v22H1z" fill="#505050"/><path d="M1 1h26v3H1z" fill="#1786cf"/><path d="M4 9h8M4 13h6M4 17h5" stroke="#8fbf8f"/><path d="M13 14q0-3 3-3h3q3 0 3 3v6h-6q-3 0-3 4h-1q-3 0-3-4t4-4h6v-1h-6z" fill="#4f8fc6"/><path d="M23 15h3q3 0 3 4t-3 5h-7v1h5q0 4-4 4h-2q-3 0-3-3v-3q0-2 3-2h3q2 0 2-3z" fill="#ffd94a"/></svg></div>
    <div class="run"><svg viewBox="0 0 30 30"><rect x="1" y="0" width="28" height="27" rx="4" fill="#b30b00"/><path d="M14 6q3 0 1 7-3 8-7 8-3-2 7-5 9-2 8 1-4 2-8-5-3-5-1-6z" fill="none" stroke="#fff" stroke-width="1.600"/></svg></div>
    <div class="run act"><svg viewBox="0 0 30 30"><path d="M15 0h11v29H15z" fill="#e09a12"/><path d="M9 7h11v22H9z" fill="#f0bd29"/><path d="M3 14h11v15H3z" fill="#fbdf62"/></svg></div>
  </div>
  <div class="tray">
    <svg class="t-up" width="14" height="10" viewBox="0 0 14 10"><path d="M1 9l6-7 6 7" fill="none" stroke="#fff" stroke-width="1.700"/></svg>
    <svg class="t-cloud" width="22" height="18" viewBox="0 0 22 18"><path d="M9 9q-1-8 5-8 5 0 6 6l-4 6z" fill="#888"/><path d="M2 12q-2-5 3-6 3-4 7 0l2 7H4z" fill="#d8d8d8"/><circle cx="15" cy="11.500" r="6" fill="#fff"/><path d="M11.500 11a3.500 3.500 0 0 1 6-2M18.500 12a3.500 3.500 0 0 1-6 2.500" fill="none" stroke="#1479c9" stroke-width="1.600"/></svg>
    <div class="t-lang">ENG<br>IN</div>
    <svg class="t-mon" width="20" height="20" viewBox="0 0 20 20"><path d="M12 1H3Q1 1 1 3v10q0 2 2 2h13v-5M6 19h9M10 15v4M14 1h5v6h-5zM16.500 7v9" fill="none" stroke="#fff" stroke-width="1.400"/></svg>
    <svg class="t-snd" width="20" height="18" viewBox="0 0 20 18"><path d="M1 6h4l4-4v14l-4-4H1zM12 6q2 3 0 6M14.500 3.500q4 5.500 0 11M17 1.500q5 7.500 0 15" fill="none" stroke="#fff" stroke-width="1.300"/></svg>
    <svg class="t-bat" width="20" height="14" viewBox="0 0 20 14"><rect x="1" y="1" width="16" height="12" rx="3" fill="none" stroke="#fff" stroke-width="1.400"/><path d="M3.500 3.500h8v7h-8z" fill="#fff"/><path d="M19 5v4" stroke="#fff" stroke-width="2"/></svg>
    <div class="t-time">11:48<br>13-08-2024</div>
    <svg class="t-bell" width="18" height="20" viewBox="0 0 18 20"><path d="M10 2Q3 2 3 8v5l-2 3h15l-2-3v-1M6 16q0 3 2.500 3t2.500-3M6 7h4l-4 5h4M12 1h4l-4 5h4" fill="none" stroke="#fff" stroke-width="1.300"/></svg>
    <svg class="t-cop" width="30" height="30" viewBox="0 0 30 30"><defs><linearGradient id="cpa" x2="0" y2="1"><stop stop-color="#2173e8"/><stop offset=".5" stop-color="#26b5a5"/><stop offset="1" stop-color="#f5c030"/></linearGradient><linearGradient id="cpb" x2="0" y2="1"><stop stop-color="#9c5cf0"/><stop offset="1" stop-color="#f06a7a"/></linearGradient></defs><path d="M20 1H9C5 1 4 5 2 11s-3 9 3 9h4c4 0 4-7 6-13 1-4 3-6 5-6z" fill="url(#cpa)"/><path d="M15 1h4c3 0 3 6 5 7h-7z" fill="#1b4fd0"/><path d="M11 27h10c4 0 5-4 7-10s1-9-4-9h-3c-4 0-4 6-6 12-1 4-2 7-4 7z" fill="url(#cpb)"/><rect x="7" y="20" width="23" height="10" rx="2" fill="#ffc20e"/><text x="9.500" y="28.500" class="pre">PRE</text></svg>
  </div>
</footer>
</body>
</html>
```
FILE: styles.css
```css
* { box-sizing: border-box; }
body { margin: 0; width: 1920px; height: 1080px; overflow: hidden; display: flex; flex-direction: column; background: #f3f2f1; color: #252423; font-family: "Open Sans", "Noto Sans", sans-serif; font-size: 14.5px; letter-spacing: -0.2px; white-space: nowrap; }
svg { display: block; flex: none; overflow: visible; }
.defs { position: absolute; }

/* title bar */
.titlebar { height: 43px; flex: none; background: #3b3a38; color: #fff; display: flex; align-items: center; }
.quick { display: flex; align-items: center; width: 746px; padding-left: 21px; }
.quick > svg { margin-right: 17px; }
.quick > svg:nth-of-type(4) { margin: 3px 0 0 9px; }
.doc-name { width: 308px; margin-left: -7px; padding-top: 6px; font-size: 14.5px; letter-spacing: -0.07px; }
.top-search { width: 500px; height: 30px; margin-top: -1px; background: #d4d3d1; border-radius: 2px; display: flex; align-items: center; padding-left: 21px; gap: 15px; color: #444; font-size: 16px; }
.top-search span { color: #2b5b50; }
.account { display: flex; align-items: center; justify-content: flex-end; gap: 11px; width: 490px; font-size: 14.3px; letter-spacing: -0.16px; }
.winctl { display: flex; gap: 41px; margin-left: 40px; }

/* menu */
.menu { height: 43px; flex: none; display: flex; background: #fafafa; padding-left: 28px; font-size: 17px; letter-spacing: -0.3px; }
.menu a { height: 38px; line-height: 39px; }
.m-file { width: 73px; }
.m-home { width: 48px; margin-right: 39px; font-weight: 700; letter-spacing: -0.6px; border-bottom: 3px solid #117865; }
.m-insert { width: 83px; } .m-model { width: 114px; letter-spacing: -0.15px; } .m-view { width: 75px; } .m-opt { width: 110px; letter-spacing: -0.2px; }
.share { margin: 5px 7px 0 auto; width: 105px; height: 30px; border: 0; border-radius: 4px; background: #117865; color: #fff; display: flex; align-items: center; padding: 0 0 0 9px; font: 15px "Open Sans", sans-serif; letter-spacing: -0.3px; }
.share span { margin: -2px 5px 0 9px; }

/* ribbon */
.ribbon { height: 114px; flex: none; background: #fafafa; display: flex; padding-top: 2px; position: relative; z-index: 2; box-shadow: 0 1px 4px rgba(0,0,0,.22); color: #333; }
.group { height: 110px; border-right: 1px solid #d2d0ce; display: flex; flex-direction: column; }
.btns { display: flex; height: 96px; flex: none; }
.glabel { text-align: center; font-size: 12.3px; line-height: 18px; letter-spacing: -0.25px; margin-left: -6px; }
.g-clip { width: 201px; padding-left: 6px; } .g-clip .btns { color: #bdbbb9; }
.g-data { width: 459px; padding-left: 5px; }
.g-query { width: 145px; padding-left: 8px; }
.g-ins { width: 184px; padding-left: 9px; }
.g-calc { width: 143px; padding-left: 11px; }
.g-sens { width: 91px; padding-left: 5px; }
.g-share { width: 74px; padding-left: 5px; }
.rb { display: flex; flex-direction: column; align-items: center; padding-top: 6px; text-align: center; font-size: 14.6px; line-height: 20px; letter-spacing: -0.3px; }
.rb > span { margin-top: 2px; align-self: center; }
.ri { width: 36px; height: 40px; }
.cv { display: inline-block; width: 9px; height: 8px; margin-left: 2px; }
.dim { color: #c4c2c0; } .dim .cv { opacity: .4; }
.w-paste { width: 56px; } .w38 { width: 38px; } .w48 { width: 48px; } .w50 { width: 50px; } .w52 { width: 52px; } .w58 { width: 58px; } .w60 { width: 60px; } .w62 { width: 62px; } .w64 { width: 64px; } .w74 { width: 74px; } .w80 { width: 80px; } .w90 { width: 88px; margin-right: 2px; }
.clip-list { display: flex; flex-direction: column; padding: 0 0 0 3px; }
.clip-list div { display: flex; align-items: center; gap: 4px; height: 30px; line-height: 20px; padding-bottom: 2px; }
.collapse { margin: 101px 6px 0 auto; }

/* workspace */
.work { height: 790px; flex: none; display: flex; }
.views { width: 51px; border-right: 1px solid #dedcda; display: flex; flex-direction: column; }
.v { height: 50px; display: flex; align-items: center; justify-content: center; border-left: 3px solid transparent; padding: 0 2px 2px 0; }
.v.on { border-color: #117865; }
.dax { font: 700 9px "Open Sans", sans-serif; fill: #666; }
.center { width: 1417px; display: flex; flex-direction: column; }
.stage { height: 746px; display: flex; background: #fff; padding-left: 8px; }
.report { width: 1344px; display: flex; background: #000; box-shadow: 0 0 9px rgba(0,0,0,.25); }
.side { width: 202px; display: flex; flex-direction: column; align-items: flex-start; color: #fff; }
.back { margin: 4px 0 0 4px; }
.logo { margin: 3px 0 0 15px; width: 179px; height: 156px; border: solid #0b0b0b; border-width: 0 7px; display: flex; justify-content: center; align-items: center; padding-right: 1px; }
.navbtn { width: 171px; height: 45px; margin: 15px 0 0 16px; background: #666; border: 2px solid #333; text-align: center; line-height: 42px; font-size: 13.8px; letter-spacing: -0.3px; }
.navbtn + .navbtn { margin-top: 10px; height: 44px; }
.navbtn + .sel { height: 45px; background: #fff; color: #000; border-color: #888; font-size: 16px; letter-spacing: 0.05px; line-height: 44px; }
.slabel { display: flex; align-items: flex-start; height: 25px; font-weight: 700; font-size: 14.5px; line-height: 23px; color: #f0f0f0; letter-spacing: 0.08px; }
.slabel i { width: 9px; height: 19px; background: #c8c8c8; border: 1px solid #999; }
.s1 { margin: 20px 0 0 19px; } .s2 { margin: 25px 0 0 18px; } .s3 { margin: 18px 0 0 15px; } .s4 { margin: 23px 0 0 18px; }
.s1 i { margin-left: 6px; } .s2 i { margin-left: 4px; } .s3 i { margin-left: 1px; } .s4 i { margin-left: 7px; }
.slicer { margin-left: 6px; width: 191px; height: 44px; background: #0a4680; padding: 11px; }
.tall { height: 50px; }
.soft { margin-left: 7px; width: 190px; height: 45px; }
.slicer div { width: 169px; height: 27px; border: 1px solid #d0d6de; display: flex; align-items: center; justify-content: space-between; padding: 1px 5px 0; font-size: 12.7px; font-weight: 600; color: #9ad0ff; letter-spacing: -0.4px; }
.soft div { border-color: #7f9dbd; height: 28px; }

/* report body */
.body { width: 1142px; background: linear-gradient(#000 58px, #00053d 58px); display: flex; flex-direction: column; }
h1 { margin: 0 0 0 241px; height: 72px; font-size: 27.2px; line-height: 56px; font-weight: 700; color: #fff; letter-spacing: -0.1px; }
h1 em { font-style: normal; color: #9ad0ff; }
.kpis { display: flex; padding-left: 15px; gap: 22px; height: 125px; }
.kpi { width: 205.600px; height: 123px; margin-top: 2px; background: #042e5c; border: 1px solid #052652; display: flex; flex-direction: column; align-items: center; color: #e8e8e8; }
.hot { background: #93462c; border-color: #6d3030; height: 125px; margin-top: 0; }
.kpi b { margin: 5px 0 0 17px; font-size: 14.4px; line-height: 20px; color: #9ad0ff; letter-spacing: -0.33px; }
.hot b { margin: 4px 0 0 23px; letter-spacing: -0.25px; }
.kpi strong { font: 700 38px/40px Roboto, sans-serif; letter-spacing: 0; color: #fff; margin-top: 5px; transform: scaleX(.88); }
.hot strong { margin-top: 6px; }
.pair { width: 208px; display: flex; justify-content: space-between; font-size: 15.8px; font-weight: 600; line-height: 24px; letter-spacing: -0.35px; align-self: flex-start; }
.pair span { width: 106px; text-align: center; }
.lab { font-size: 13.6px; line-height: 22px; margin: -3px 0 0; }
.pair.lab + .pair { margin-top: 1px; }
.lab span:first-child { color: #e3c22d; }
.lab span:last-child { color: #f0a0d8; }
.hot .pair span:first-child { width: 95px; }
.hot .lab { margin-top: -3px; }
.hot .pair.lab + .pair { margin-top: 2px; }
.tablebox { margin: 16px 0 0 16px; width: 1114px; height: 527px; border-radius: 15px; background: #03305f; display: flex; padding: 4px 0 0 19px; }
.clip { width: 1067px; height: 518px; overflow: hidden; flex: none; }
table { width: 1067px; table-layout: fixed; border-collapse: collapse; font-size: 13.300px; letter-spacing: -0.13px; color: #fff; }
.c63 { width: 63px; } .c153 { width: 153px; } .c124 { width: 124px; } .c48 { width: 48px; } .c76 { width: 76px; } .c156 { width: 156px; } .c106 { width: 106px; } .c87 { width: 87px; } .c102 { width: 102px; } .c152 { width: 152px; }
th { height: 53px; background: #252423; border-bottom: 2px solid #1668a8; text-align: left; vertical-align: top; padding: 5px 4px 0; font-weight: 400; line-height: 19px; }
th + th { border-left: 1px solid #202c38; }
td { height: 26.250px; padding: 1px 5px 0; font-weight: 600; line-height: 20px; letter-spacing: 0.02px; }
td:nth-child(6) { letter-spacing: -0.25px; padding-left: 4px; }
td:first-child, td:nth-child(n+7) { text-align: right; }
tbody tr:nth-child(odd) { background: #0a4680; }
tbody tr:nth-child(even) { background: #333; }
.sort { margin-top: -2px; }
.tscroll { margin-left: 25px; width: 9px; height: 518px; background: #8084a8; border-radius: 5px; flex: none; }
.tscroll i { display: block; height: 18px; background: #33365a; border: 1px solid #777; border-radius: 5px; }

.vscroll { width: 25px; border-right: 1px solid #b5b3b1; padding: 12px 2px 0 11px; }
.vscroll i { display: block; width: 11px; height: 724px; border-radius: 6px; background: #c8c8c8; }
.filters { width: 40px; display: flex; flex-direction: column; align-items: center; padding-top: 15px; }
.filters svg + svg { margin: 19px 0 0 7px; }
.flip { transform: scaleX(-1); }
.filters span { writing-mode: vertical-rl; font-size: 17px; font-weight: 600; letter-spacing: 0.3px; margin: 9px 0 0 2px; }

/* page tabs */
.pages { height: 44px; display: flex; }
.dev { width: 30px; margin-left: 13px; height: 38px; padding: 9px 2px 0; }
.dev.on { border-bottom: 3px solid #117865; }
.phone { padding: 6px 0 0; margin-left: 31px; width: 43px; }
.arrows { width: 42px; padding-top: 16px; }
.arrows svg { transform: scaleX(.94); }
.tab { background: #fff; border-left: 1px solid #c8c6c4; text-align: center; line-height: 45px; font-size: 15px; letter-spacing: -0.3px; padding-right: 1px; }
.t1 { width: 113px; border-color: #999; } .t2 { width: 112px; padding: 0; } .t3 { width: 98px; }
.cur { font-weight: 600; border-bottom: 5px solid #117865; position: relative; letter-spacing: -0.7px; }
.cur sup { position: absolute; right: 6px; top: -11px; font-size: 13px; }
.plus { width: 49px; background: #117865; display: flex; align-items: center; justify-content: center; margin-left: 1px; padding-bottom: 3px; }

/* visualizations pane */
.vis { width: 227px; border-left: 1px solid #dedcda; border-right: 1px solid #dedcda; display: flex; flex-direction: column; }
.phead { display: flex; justify-content: space-between; align-items: center; padding: 8px 10px 0 10px; height: 40px; font-size: 18.500px; font-weight: 600; letter-spacing: -0.35px; flex: none; }
.build { padding-left: 10px; margin-top: 7px; height: 25px; line-height: 22px; font-weight: 600; font-size: 14.3px; letter-spacing: -0.25px; flex: none; }
.modes { display: flex; padding-left: 10px; gap: 43px; flex: none; }
.mode { width: 40px; height: 40px; display: flex; align-items: center; justify-content: center; }
.mode.on { background: #d2d0ce; border-radius: 3px; }
.notch { margin-top: 6px; }
.icons { display: grid; grid-template-columns: repeat(6, 23px); gap: 12px; padding: 14px 0 0 14px; }
.icons svg { width: 23px; height: 23px; }
.n123 { font: 10.500px "Open Sans", sans-serif; fill: #1a86d2; letter-spacing: 0; }
.rtxt { font: 700 19px "Open Sans", sans-serif; fill: #1e88c8; }
.pytxt { font: 700 20px "Open Sans", sans-serif; fill: #1e88c8; letter-spacing: -0.5px; }
.dots { padding: 4px 0 0 15px; height: 47px; line-height: 24px; font-size: 17px; font-weight: 700; border-bottom: 1px solid #dedcda; letter-spacing: -0.900px; }
.wells { padding: 0 7px 0 5px; color: #333; font-size: 14.8px; letter-spacing: -0.15px; }
.wl { padding: 9px 0 0 10px; height: 37px; line-height: 22px; }
.drop { height: 36px; border: 1px dashed #c4c2c0; border-radius: 3px; background: #fff; line-height: 34px; padding-left: 13px; font-size: 14.6px; letter-spacing: -0.22px; }
.dt { padding: 14px 0 0 10px; height: 44px; font-weight: 600; color: #484644; font-size: 14.3px; }
.opt { display: flex; justify-content: space-between; align-items: center; height: 20px; padding: 0 20px 0 10px; font-size: 14.6px; letter-spacing: -0.2px; }
.o2 { margin-top: 14px; }
.tog { width: 40px; height: 20px; border: 1px solid #8a8886; border-radius: 10px; background: #fff; display: flex; align-items: center; justify-content: center; gap: 2px; font-size: 11px; color: #605e5c; }
.tog i { width: 10px; height: 10px; border-radius: 5px; background: #605e5c; }
.onn { background: #117865; border-color: #117865; color: #fff; gap: 4px; }
.onn i { background: #fff; }
.d2 { margin-top: 13px; height: 32px; line-height: 31px; padding-left: 10px; letter-spacing: -0.13px; }

/* data pane */
.datap { width: 225px; }
.dsearch { margin: 17px 5px 10px 5px; height: 34px; border: 1px solid #777; border-radius: 2px; display: flex; align-items: center; gap: 8px; padding-left: 9px; color: #605e5c; font-size: 16px; letter-spacing: -0.2px; }
.tree { height: 30.200px; display: flex; align-items: center; padding-left: 19px; font-size: 14.5px; letter-spacing: -0.25px; color: #444; }
.tree svg:first-child { margin-right: 9px; }
.tree svg + svg { margin-right: 4px; }

/* status bar */
.status { height: 29px; flex: none; border-top: 1px solid #dedcda; display: flex; align-items: center; padding: 2px 5px 0; color: #555; font-size: 15px; letter-spacing: -0.3px; }
.pg { flex: 1; }
.zoom { margin-right: 12px; }
.pct { width: 52px; font-size: 14.5px; padding-bottom: 2px; }
.fit { margin-right: 17px; }
.upd { width: 240px; }

/* taskbar */
.taskbar { height: 61px; flex: none; background: #202020; border-top: 1px solid #000; box-shadow: inset 0 1px #484848; display: flex; color: #fff; font-size: 14.2px; letter-spacing: -0.2px; }
.weather { width: 429px; padding: 7px 0 0 27px; display: flex; gap: 5px; line-height: 20px; }
.weather > div { padding-top: 3px; }
.dimt { color: #c8c8c8; letter-spacing: 0.08px; }
.one { font: 13px "Open Sans", sans-serif; fill: #222; }
.apps { display: flex; }
.apps div { width: 55.200px; height: 50px; margin-top: 5px; display: flex; flex-direction: column; align-items: center; padding-top: 10px; }
.apps svg { width: 30px; height: 30px; }
.run::after { content: ""; width: 7px; height: 4px; border-radius: 2px; background: #9a9a9a; margin-top: 5px; }
.apps .act { width: 50px; margin-left: 2.500px; background: #2e2e2e; border: 1px solid #383838; border-radius: 5px; padding-top: 9px; }
.act::after { width: 20px; background: #9fb2c4; }
.wtxt { font: 700 12px "Open Sans", sans-serif; fill: #fff; }
.tray { display: flex; align-items: center; margin-left: 87px; padding-bottom: 1px; line-height: 20px; }
.t-cloud { margin-left: 22px; }
.t-lang { width: 44px; text-align: center; margin-left: 14px; letter-spacing: 0; }
.t-mon { margin-left: 15px; } .t-snd { margin-left: 10px; } .t-bat { margin-left: 10px; }
.t-time { width: 98px; text-align: right; letter-spacing: 0.1px; }
.t-bell { margin-left: 11px; } .t-cop { margin-left: 19px; }
.pre { font: 700 8px "Open Sans", sans-serif; fill: #111; letter-spacing: .4px; }
```
